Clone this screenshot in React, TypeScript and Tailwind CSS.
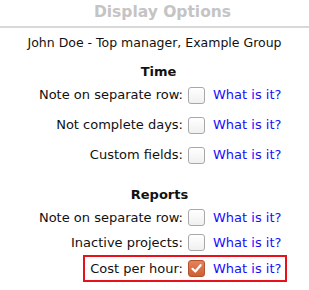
import React from "react";

function Box({ checked }: { checked?: boolean }) {
  if (checked) {
    return (
      <span className="flex h-[17px] w-[17px] shrink-0 items-center justify-center rounded-[3px] border border-[#b5532c] bg-gradient-to-b from-[#e6825a] to-[#cc5f35]">
        <svg width="13" height="13" viewBox="0 0 13 13">
          <path d="M2.5 6.8 L5.3 9.5 L10.6 3.2" fill="none" stroke="white" strokeWidth="2.2" strokeLinecap="round" strokeLinejoin="round" />
        </svg>
      </span>
    );
  }
  return <span className="block h-[17px] w-[17px] shrink-0 rounded-[3px] border border-[#a8a8a8] bg-gradient-to-b from-white to-[#f0f0f0]" />;
}

function Row({ label, checked, h }: { label: string; checked?: boolean; h: string }) {
  return (
    <div className={`flex items-center ${h}`}>
      <span className="w-[183px] text-right">{label}</span>
      <span className="ml-[5px]"><Box checked={checked} /></span>
      <span className="ml-[8px] text-[#1a0dff]">What is it?</span>
    </div>
  );
}

export default function App() {
  return (
    <div className="w-[309px] h-[290px] bg-white text-[13px] leading-[16px] text-[#111]" style={{ fontFamily: '"DejaVu Sans", sans-serif' }}>
      <div className="flex h-[26px] items-center justify-center pb-[2px] pl-[16px] text-[15.5px] font-bold text-[#c4c4c4]">Display Options</div>
      <div className="border-t-2 border-[#d8d8d8]" />
      <div className="mt-[7px] text-center text-[12.5px] leading-[15px]">John Doe - Top manager, Example Group</div>
      <div className="mt-[14px] pl-[8px] text-center font-bold">Time</div>
      <Row label="Note on separate row:" h="h-[30px]" />
      <Row label="Not complete days:" h="h-[30px]" />
      <Row label="Custom fields:" h="h-[30px]" />
      <div className="mt-[17px] pl-[10px] text-center font-bold">Reports</div>
      <div className="mt-[2px]">
        <Row label="Note on separate row:" h="h-[25px]" />
        <Row label="Inactive projects:" h="h-[25px]" />
        <div className="ml-[83px] flex h-[27px] w-[204px] items-center border-2 border-[#e8101a]">
          <span className="w-[98px] text-right">Cost per hour:</span>
          <span className="ml-[5px]"><Box checked /></span>
          <span className="ml-[8px] text-[#1a0dff]">What is it?</span>
        </div>
      </div>
    </div>
  );
}
